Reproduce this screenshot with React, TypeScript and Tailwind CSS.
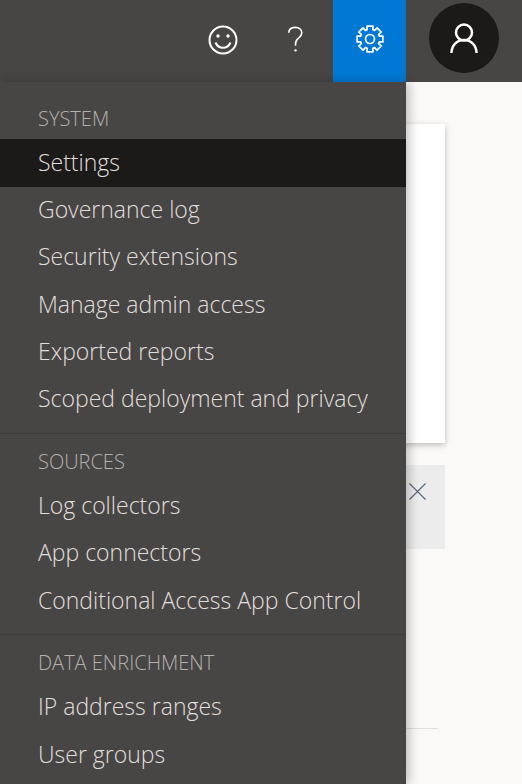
const sections = [
  {
    title: 'SYSTEM',
    items: ['Settings', 'Governance log', 'Security extensions', 'Manage admin access', 'Exported reports', 'Scoped deployment and privacy'],
  },
  {
    title: 'SOURCES',
    items: ['Log collectors', 'App connectors', 'Conditional Access App Control'],
  },
  {
    title: 'DATA ENRICHMENT',
    items: ['IP address ranges', 'User groups'],
  },
];

// 8 teeth round the centre of the 30x30 box
const gearPath = Array.from({ length: 8 }, (_, i) => {
  const at = (deg: number, r: number) => {
    const a = ((i * 45 + deg - 90) * Math.PI) / 180;
    return `${(15 + r * Math.cos(a)).toFixed(2)} ${(15 + r * Math.sin(a)).toFixed(2)}`;
  };
  return `${i === 0 ? 'M' : 'L'}${at(-13, 13.2)} L${at(13, 13.2)} L${at(17, 9.8)} L${at(28, 9.8)}`;
}).join(' ') + ' Z';

function Smiley() {
  return (
    <svg width="30" height="30" viewBox="0 0 30 30" fill="none" stroke="white" strokeWidth="2">
      <circle cx="15" cy="15" r="13.5" />
      <path d="M7.5 17.5c1.6 3.600 4.300 5.300 7.500 5.300s5.900-1.700 7.500-5.300" />
      <circle cx="10" cy="11" r="1.700" fill="white" stroke="none" />
      <circle cx="20" cy="11" r="1.700" fill="white" stroke="none" />
    </svg>
  );
}

function Question() {
  return (
    <svg width="17" height="27" viewBox="0 0 18 30" fill="none" stroke="white" strokeWidth="1.800">
      <path d="M1.500 7.500C1.700 3.800 4.700 1.500 8.800 1.500c4.200 0 7.200 2.400 7.200 6 0 2.800-1.500 4.300-3.600 6-2.200 1.700-3.400 3.300-3.400 6.500v2" />
      <circle cx="9" cy="27" r="1.300" fill="white" stroke="none" />
    </svg>
  );
}

function Gear() {
  return (
    <svg width="30" height="30" viewBox="0 0 30 30" fill="none" stroke="white" strokeWidth="1.700" strokeLinejoin="round">
      <path d={gearPath} />
      <circle cx="15" cy="15" r="4.500" />
    </svg>
  );
}

function Person() {
  return (
    <svg width="28" height="31" viewBox="0 0 28 31" fill="none" stroke="white" strokeWidth="2.500">
      <circle cx="14" cy="9.500" r="8" />
      <path d="M1.500 30c0-7.500 5.500-13 12.500-13s12.500 5.500 12.500 13" />
    </svg>
  );
}

export default function App() {
  return (
    <div className="relative h-[784px] w-[522px] overflow-hidden bg-[#faf9f8] font-['Open_Sans','Noto_Sans',sans-serif]">
      <header className="flex h-[82px] items-stretch bg-[#484644]">
        <div className="flex w-[333px] items-center justify-end pr-[1px]">
          <div className="flex w-[73px] items-center justify-center pb-[3px]"><Smiley /></div>
          <div className="flex w-[73px] items-center justify-center pb-[3px]"><Question /></div>
        </div>
        <div className="flex w-[73px] items-center justify-center bg-[#0078d4] pb-[5px]"><Gear /></div>
        <div className="flex flex-1 items-center justify-center pb-[6px]">
          <div className="flex h-[70px] w-[70px] items-center justify-center rounded-full bg-[#1b1a19]"><Person /></div>
        </div>
      </header>

      <main className="pt-[42px] pl-[20px]">
        <div className="h-[319px] w-[425px] bg-white shadow-[0_2px_6px_rgba(0,0,0,0.25)]" />
        <div className="mt-[22px] flex h-[84px] w-[425px] items-start justify-end bg-[#ececec] pt-[18px] pr-[19px]">
          <svg width="17" height="17" viewBox="0 0 17 17" stroke="#5a6b7c" strokeWidth="1.200">
            <path d="M0.500 0.500l16 16M16.500 0.500l-16 16" />
          </svg>
        </div>
        <div className="mt-[179px] h-px w-[418px] bg-[#e1dfdd]" />
      </main>

      <nav className="absolute top-[82px] left-0 h-[702px] w-[406px] bg-[#484644] shadow-[3px_0_10px_rgba(0,0,0,0.25)]">
        {sections.map((section, i) => (
          <div key={section.title} className={i > 0 ? 'mt-[10.5px] border-t border-[#3f3d3b] pt-[5px]' : 'pt-[14px]'}>
            <div className="flex h-[43px] items-start pl-[38px] text-[20px] font-light leading-[45px] text-[#b3b0ad]">
              {section.title}
            </div>
            {section.items.map(item => (
              <div
                key={item}
                className={item === 'Settings'
                  ? 'mb-[-1.4px] flex h-[48px] items-center bg-[#1b1a19] pb-[1px] pl-[38px] text-[23px] font-light whitespace-nowrap text-[#e1dfdd]'
                  : 'flex h-[47.3px] items-center pl-[38px] text-[23px] font-light whitespace-nowrap text-[#e1dfdd]'}
              >
                {item}
              </div>
            ))}
          </div>
        ))}
      </nav>
    </div>
  );
}
